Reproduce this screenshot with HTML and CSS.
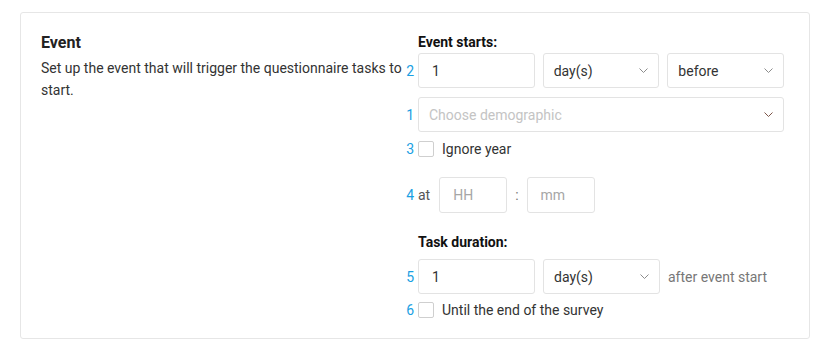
FILE: index.html
```html
<!DOCTYPE html>
<html lang="en">
<head>
  <meta charset="UTF-8" />
  <title>Event</title>
  <link rel="stylesheet" href="styles.css">
</head>
<body>
  <div class="card">
    <div class="intro">
      <h2>Event</h2>
      <p>Set up the event that will trigger the questionnaire tasks to start.</p>
    </div>

    <div class="form">
      <div class="label">Event starts:</div>
      <div class="row">
        <span class="num">2</span>
        <div class="box input">1</div>
        <div class="box select">day(s)<svg class="chev" viewBox="0 0 9 5"><path d="M0.5 0.5 L4.5 4.5 L8.5 0.5"/></svg></div>
        <div class="box select">before<svg class="chev" viewBox="0 0 9 5"><path d="M0.5 0.5 L4.5 4.5 L8.5 0.5"/></svg></div>
      </div>
      <div class="row gap-s">
        <span class="num">1</span>
        <div class="box select wide placeholder">Choose demographic<svg class="chev dark" viewBox="0 0 9 5"><path d="M0.5 0.5 L4.5 4.5 L8.5 0.5"/></svg></div>
      </div>
      <label class="check gap-s">
        <span class="num">3</span>
        <span class="tick"></span>
        Ignore year
      </label>
      <div class="row time">
        <span class="num">4</span>
        <span class="at">at</span>
        <div class="box small">HH</div>
        <span class="colon">:</span>
        <div class="box small">mm</div>
      </div>

      <div class="label second">Task duration:</div>
      <div class="row">
        <span class="num">5</span>
        <div class="box input">1</div>
        <div class="box select">day(s)<svg class="chev" viewBox="0 0 9 5"><path d="M0.5 0.5 L4.5 4.5 L8.5 0.5"/></svg></div>
        <span class="after">after event start</span>
      </div>
      <label class="check last">
        <span class="num">6</span>
        <span class="tick"></span>
        Until the end of the survey
      </label>
    </div>
  </div>
</body>
</html>
```

FILE: styles.css
```css
body {
  margin: 0;
  padding: 12px 29px 0 20px;
  background: #fff;
  font-family: Roboto, "Liberation Sans", sans-serif;
  color: #333;
}

.card {
  display: grid;
  grid-template-columns: 1fr 366px;
  column-gap: 16px;
  border: 1px solid #e6e6e6;
  border-radius: 3px;
  padding: 20px 25px 20px 20px;
}

.intro h2 {
  margin: 0 0 4px;
  font-size: 16px;
  line-height: 20px;
  font-weight: 700;
  color: #222;
}

.intro p {
  margin: 0;
  font-size: 14px;
  line-height: 22px;
  color: #333;
}

.form {
  display: flex;
  flex-direction: column;
}

.label {
  font-size: 14px;
  line-height: 18px;
  font-weight: 700;
  color: #111;
  margin-bottom: 2px;
}

.label.second {
  margin-top: 20px;
  margin-bottom: 8px;
}

.row {
  position: relative;
  display: flex;
  align-items: center;
  gap: 8px;
}

.gap-s {
  margin-top: 9px;
}

.num {
  position: absolute;
  right: calc(100% + 4px);
  top: 50%;
  transform: translateY(-50%);
  font-size: 14px;
  color: #1a9fe3;
}

.box {
  box-sizing: border-box;
  height: 35px;
  border: 1px solid #e3e3e3;
  border-radius: 3px;
  display: flex;
  align-items: center;
  font-size: 14px;
  color: #333;
  padding: 0 13px;
}

.input,
.select {
  width: 117px;
}

.select {
  justify-content: space-between;
  padding-right: 10px;
  padding-left: 10px;
}

.select.wide {
  width: 100%;
}

.placeholder {
  color: #c4c4c4;
}

.chev {
  width: 9px;
  height: 5px;
  fill: none;
  stroke: #8c8c8c;
  stroke-width: 1;
}

.chev.dark {
  stroke: #7d5548;
}

.check {
  position: relative;
  display: flex;
  align-items: center;
  gap: 8px;
  font-size: 14px;
  line-height: 16px;
  color: #333;
}

.check.last {
  margin-top: 8px;
}

.tick {
  box-sizing: border-box;
  width: 16px;
  height: 16px;
  border: 1px solid #cfcfcf;
  border-radius: 2px;
  background: #fff;
}

.time {
  margin-top: 20px;
}

.at {
  font-size: 14px;
  color: #555;
  margin-right: 1px;
}

.small {
  width: 68px;
  height: 36px;
  color: #a6a6a6;
}

.colon {
  font-size: 14px;
  color: #777;
}

.after {
  font-size: 14px;
  color: #777;
}
```
